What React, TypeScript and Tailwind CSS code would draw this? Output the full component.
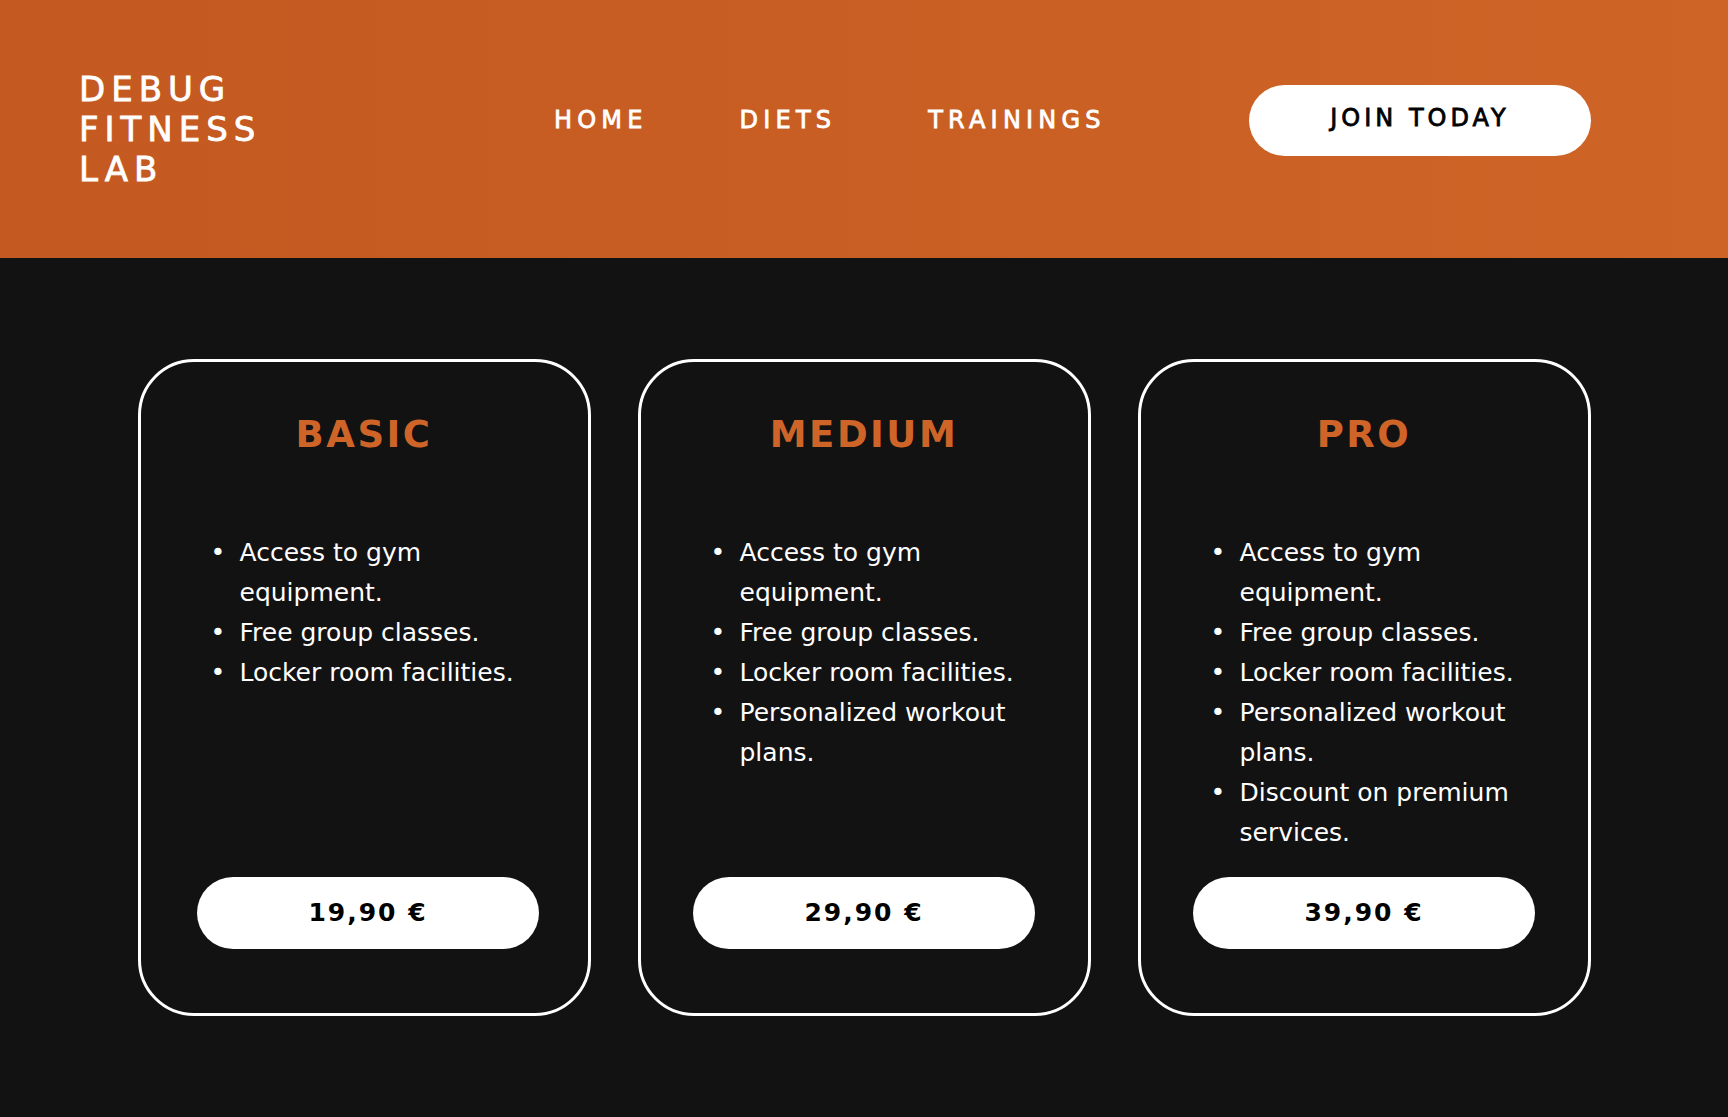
import React from "react";

const plans = [
  {
    name: "BASIC",
    price: "19,90 €",
    features: ["Access to gym equipment.", "Free group classes.", "Locker room facilities."],
  },
  {
    name: "MEDIUM",
    price: "29,90 €",
    features: [
      "Access to gym equipment.",
      "Free group classes.",
      "Locker room facilities.",
      "Personalized workout plans.",
    ],
  },
  {
    name: "PRO",
    price: "39,90 €",
    features: [
      "Access to gym equipment.",
      "Free group classes.",
      "Locker room facilities.",
      "Personalized workout plans.",
      "Discount on premium services.",
    ],
  },
];

const display = "font-['DejaVu_Sans',sans-serif]";

export default function App() {
  return (
    <div className="min-h-[1117px] bg-[#121212] text-white">
      {/* header */}
      <header className="flex h-[258px] items-center bg-linear-to-r from-[#c45921] to-[#ce6426] pl-[79px] pr-[137px]">
        <div
          className={`${display} w-[475px] text-[34px] font-normal leading-[40px] tracking-[6px] text-white [-webkit-text-stroke:0.8px_white]`}
        >
          <div>DEBUG</div>
          <div>FITNESS</div>
          <div>LAB</div>
        </div>
        <nav
          className={`${display} mb-[18px] flex gap-[92px] text-[24px] font-normal tracking-[5.2px] text-white [-webkit-text-stroke:0.8px_white]`}
        >
          <a href="#">HOME</a>
          <a href="#">DIETS</a>
          <a href="#">TRAININGS</a>
        </nav>
        <button
          className={`${display} mb-[18px] ml-auto flex h-[71px] w-[342px] items-center justify-center rounded-full bg-white pb-[4px] text-[24px] font-normal tracking-[4px] text-black [-webkit-text-stroke:0.8px_black]`}
        >
          JOIN TODAY
        </button>
      </header>

      {/* pricing */}
      <main className="flex justify-center gap-[47px] pt-[101px]">
        {plans.map((plan, i) => (
          <div
            key={plan.name}
            className="flex h-[657px] w-[453px] flex-col rounded-[56px] border-[3px] border-white pb-[64px] pt-[51px]"
          >
            <h2
              className={`${display} text-center text-[37px] font-bold leading-[44px] tracking-[2.5px] text-[#cf6429]`}
            >
              {plan.name}
            </h2>
            <ul className="ml-[70px] mt-[76px] w-[330px] font-['DejaVu_Sans',sans-serif] text-[25px] leading-[40px] text-white">
              {plan.features.map((f) => (
                <li key={f} className="flex">
                  <span className="w-[29px] shrink-0">•</span>
                  <span>{f}</span>
                </li>
              ))}
            </ul>
            <button
              className={`${display} mx-auto mt-auto flex h-[72px] w-[342px] items-center justify-center rounded-full bg-white text-[25px] font-bold tracking-[2px] text-black ${
                i === 0 ? "translate-x-[4px]" : ""
              }`}
            >
              {plan.price}
            </button>
          </div>
        ))}
      </main>
    </div>
  );
}
